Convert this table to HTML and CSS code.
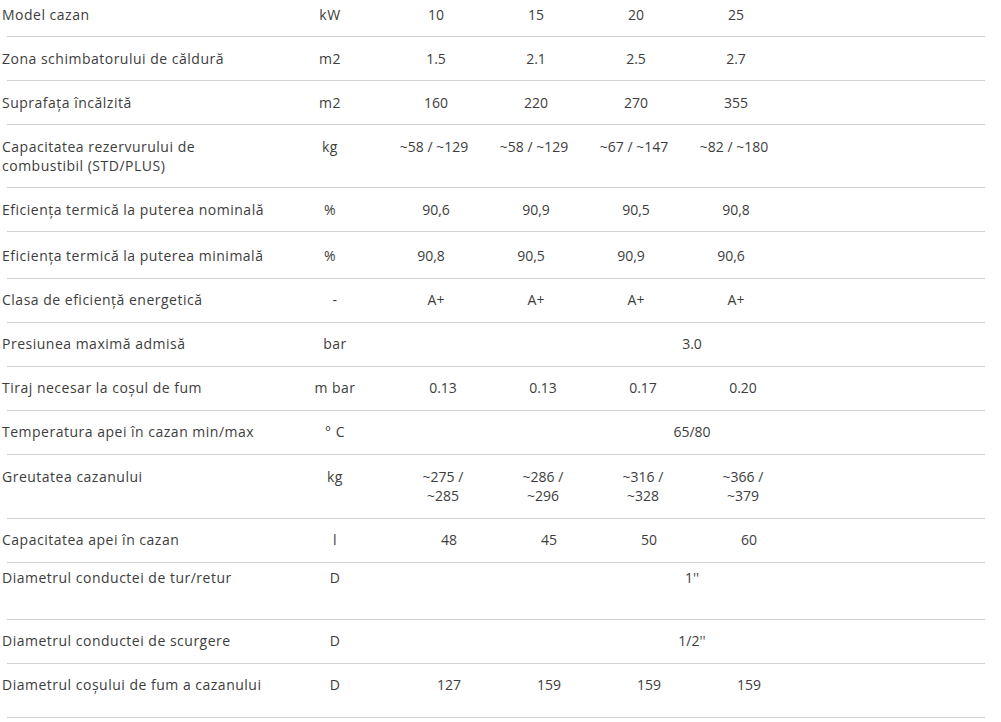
FILE: index.html
```html
<!DOCTYPE html>
<html lang="ro">
<head>
<meta charset="utf-8">
<title>Model cazan</title>
<link rel="stylesheet" href="styles.css">
</head>
<body>
<div class="table">
  <div class="row">
    <div class="cells h36 pt-first">
      <div class="label">Model cazan</div><div class="unit">kW</div>
      <div class="val">10</div><div class="val">15</div><div class="val">20</div><div class="val">25</div>
    </div>
  </div>
  <div class="row">
    <div class="cells">
      <div class="label">Zona schimbatorului de căldură</div><div class="unit">m2</div>
      <div class="val">1.5</div><div class="val">2.1</div><div class="val">2.5</div><div class="val">2.7</div>
    </div>
  </div>
  <div class="row">
    <div class="cells">
      <div class="label">Suprafața încălzită</div><div class="unit">m2</div>
      <div class="val">160</div><div class="val">220</div><div class="val">270</div><div class="val">355</div>
    </div>
  </div>
  <div class="row">
    <div class="cells h62">
      <div class="label">Capacitatea rezervurului de<br>combustibil (STD/PLUS)</div><div class="unit">kg</div>
      <div class="val dm2">~58 / ~129</div><div class="val dm2">~58 / ~129</div><div class="val dm2">~67 / ~147</div><div class="val dm2">~82 / ~180</div>
    </div>
  </div>
  <div class="row">
    <div class="cells">
      <div class="label">Eficiența termică la puterea nominală</div><div class="unit">%</div>
      <div class="val">90,6</div><div class="val">90,9</div><div class="val">90,5</div><div class="val">90,8</div>
    </div>
  </div>
  <div class="row">
    <div class="cells h46 pt-low dx-m5">
      <div class="label">Eficiența termică la puterea minimală</div><div class="unit">%</div>
      <div class="val">90,8</div><div class="val">90,5</div><div class="val">90,9</div><div class="val">90,6</div>
    </div>
  </div>
  <div class="row">
    <div class="cells pt-b">
      <div class="label">Clasa de eficiență energetică</div><div class="unit ub">-</div>
      <div class="val">A+</div><div class="val">A+</div><div class="val">A+</div><div class="val">A+</div>
    </div>
  </div>
  <div class="row">
    <div class="cells pt-b">
      <div class="label">Presiunea maximă admisă</div><div class="unit ub">bar</div>
      <div class="span">3.0</div>
    </div>
  </div>
  <div class="row">
    <div class="cells pt-b dx-p6">
      <div class="label">Tiraj necesar la coșul de fum</div><div class="unit ub">m bar</div>
      <div class="val">0.13</div><div class="val">0.13</div><div class="val">0.17</div><div class="val">0.20</div>
    </div>
  </div>
  <div class="row">
    <div class="cells pt-b">
      <div class="label">Temperatura apei în cazan min/max</div><div class="unit ub">° C</div>
      <div class="span">65/80</div>
    </div>
  </div>
  <div class="row">
    <div class="cells h63 dx-p6">
      <div class="label">Greutatea cazanului</div><div class="unit ub">kg</div>
      <div class="val">~275 /<br>~285</div><div class="val">~286 /<br>~296</div><div class="val">~316 /<br>~328</div><div class="val">~366 /<br>~379</div>
    </div>
  </div>
  <div class="row">
    <div class="cells pt-b dx-p12">
      <div class="label">Capacitatea apei în cazan</div><div class="unit ub">l</div>
      <div class="val">48</div><div class="val">45</div><div class="val">50</div><div class="val">60</div>
    </div>
  </div>
  <div class="row">
    <div class="cells h56 pt-first">
      <div class="label">Diametrul conductei de tur/retur</div><div class="unit ub">D</div>
      <div class="span">1''</div>
    </div>
  </div>
  <div class="row">
    <div class="cells pt-b">
      <div class="label">Diametrul conductei de scurgere</div><div class="unit ub">D</div>
      <div class="span">1/2''</div>
    </div>
  </div>
  <div class="row">
    <div class="cells h53 pt-b dx-p12">
      <div class="label">Diametrul coșului de fum a cazanului</div><div class="unit ub">D</div>
      <div class="val">127</div><div class="val">159</div><div class="val">159</div><div class="val">159</div>
    </div>
  </div>
</div>
</body>
</html>
```

FILE: styles.css
```css
html, body {
  margin: 0;
  padding: 0;
  background: #ffffff;
}

body {
  font-family: "Open Sans", "Liberation Sans", sans-serif;
  font-size: 14px;
  line-height: 19px;
  letter-spacing: 0.5px;
  color: #3d3d3d;
  width: 1001px;
  overflow: hidden;
}

.row::after {
  content: "";
  display: block;
  height: 1px;
  width: 978px;
  margin-left: 7px;
  background: #d3d3d3;
}

.cells {
  display: grid;
  grid-template-columns: 280px 100px 100px 100px 100px 100px 1fr;
  align-items: start;
  height: 43px;
  box-sizing: border-box;
  padding-top: 12px;
}

.h36 { height: 36px; }
.h46 { height: 46px; }
.h53 { height: 53px; }
.h56 { height: 56px; }
.h62 { height: 62px; }
.h63 { height: 63px; }

.pt-first { padding-top: 5px; }
.pt-low { padding-top: 14px; }
.pt-b { padding-top: 11px; }

.label {
  padding-left: 2px;
  white-space: nowrap;
}

.unit {
  text-align: center;
}

.unit.ub {
  padding-left: 10px;
}

.val {
  text-align: center;
  padding-left: 12px;
  white-space: nowrap;
  letter-spacing: 0;
}

.val.dm2 { padding-left: 8px; }
.dx-m5 .val { padding-left: 2px; }
.dx-p6 .val { padding-left: 26px; }
.dx-p12 .val { padding-left: 38px; }

.span {
  grid-column: 3 / -1;
  text-align: center;
  padding-left: 3px;
  letter-spacing: 0;
}
```
